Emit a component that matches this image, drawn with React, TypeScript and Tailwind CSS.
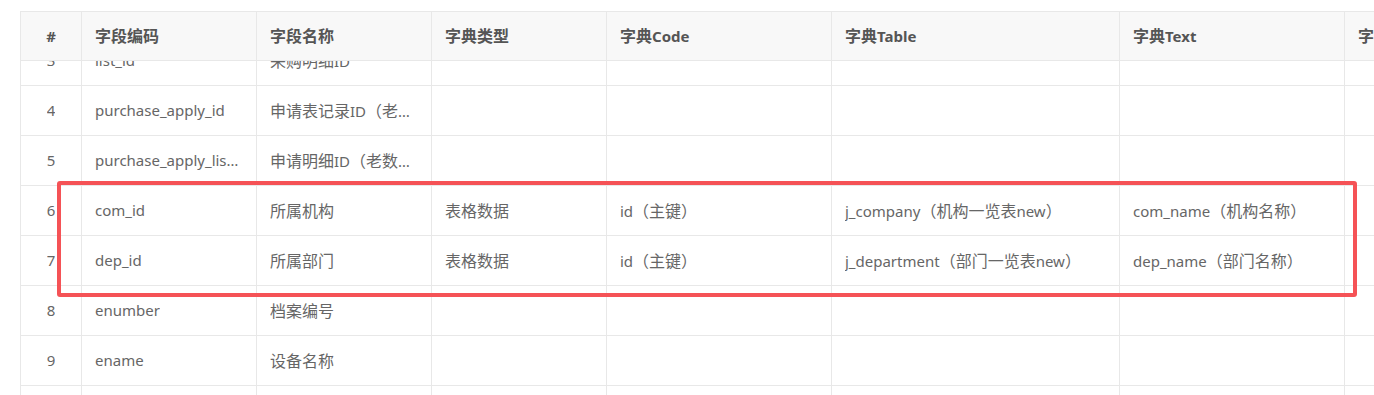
import React from "react";

const widths = ["w-[61px]", "w-[175px]", "w-[175px]", "w-[175px]", "w-[225px]", "w-[288px]", "w-[225px]", "w-[175px]"];
const headers = ["#", "字段编码", "字段名称", "字典类型", "字典Code", "字典Table", "字典Text", "字典排序"];

const rows: string[][] = [
  ["3", "list_id", "采购明细ID", "", "", "", "", ""],
  ["4", "purchase_apply_id", "申请表记录ID（老数据）", "", "", "", "", ""],
  ["5", "purchase_apply_list_id", "申请明细ID（老数据）", "", "", "", "", ""],
  ["6", "com_id", "所属机构", "表格数据", "id（主键）", "j_company（机构一览表new）", "com_name（机构名称）", ""],
  ["7", "dep_id", "所属部门", "表格数据", "id（主键）", "j_department（部门一览表new）", "dep_name（部门名称）", ""],
  ["8", "enumber", "档案编号", "", "", "", "", ""],
  ["9", "ename", "设备名称", "", "", "", "", ""],
  ["10", "", "", "", "", "", "", ""],
];

function Mixed({ text }: { text: string }) {
  const parts = text.split(/([\u3000-\u9fff\uff00-\uffef]+)/).filter((p) => p !== "");
  return (
    <>
      {parts.map((p, i) =>
        /[\u3000-\u9fff\uff00-\uffef]/.test(p) ? (
          <span key={i} className="text-[16px]">
            {p}
          </span>
        ) : (
          <span key={i}>{p}</span>
        )
      )}
    </>
  );
}

export default function App() {
  return (
    <div
      className="relative w-[1374px] h-[395px] overflow-hidden bg-white"
      style={{ fontFamily: '"Noto Sans", "Noto Sans CJK SC", sans-serif' }}
    >
      <div className="ml-[20px] mt-[11px] w-[1600px] border-l border-t border-[#e8e8e8]">
        <div className="flex h-[49px] bg-[#f8f8f8] border-b border-[#e8e8e8]">
          {headers.map((h, i) => (
            <div
              key={i}
              className={`${widths[i]} shrink-0 flex items-center border-r border-[#e8e8e8] text-[15px] leading-none font-bold text-[#555] ${i === 0 ? "justify-center" : "pl-[13px]"}`}
            >
              <span className="whitespace-nowrap">
                <Mixed text={h} />
              </span>
            </div>
          ))}
        </div>
        <div className="h-[400px] overflow-hidden">
          <div className="-mt-[25px]">
            {rows.map((r, ri) => (
              <div key={ri} className="flex h-[50px] border-b border-[#e8e8e8]">
                {r.map((c, i) => (
                  <div
                    key={i}
                    className={`${widths[i]} shrink-0 flex items-center border-r border-[#e8e8e8] text-[15px] text-[#666] ${i === 0 ? "justify-center" : "px-[13px]"}`}
                  >
                    <span className="truncate">
                      <Mixed text={c} />
                    </span>
                  </div>
                ))}
              </div>
            ))}
          </div>
        </div>
      </div>
      <div className="absolute left-[57px] top-[181px] w-[1300px] h-[116px] border-4 border-[#f55256] rounded-[3px]" />
    </div>
  );
}
